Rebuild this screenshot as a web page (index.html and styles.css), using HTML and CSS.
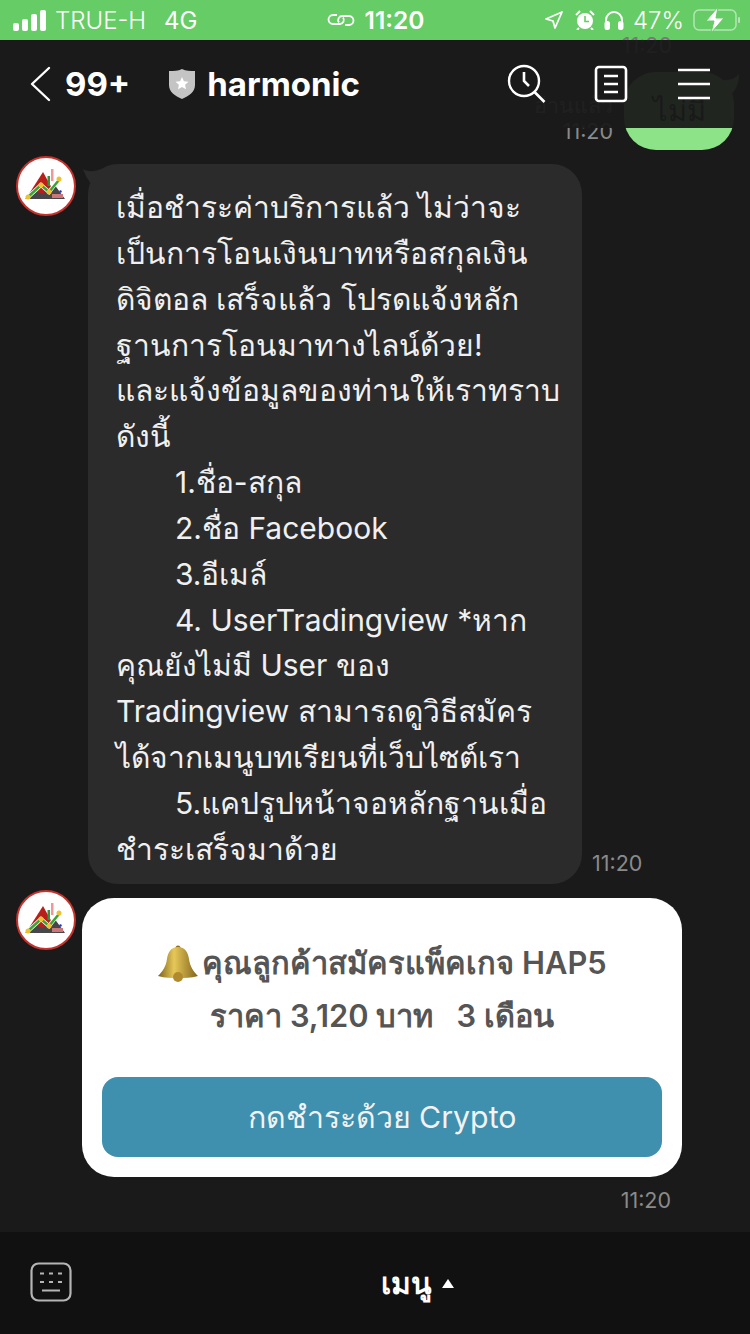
FILE: index.html
```html
<!DOCTYPE html>
<html lang="th">
    <head>
        <meta charset="UTF-8" />
        <meta name="viewport" content="width=device-width, initial-scale=1.0" />
        <title>harmonic</title>
        <link rel="stylesheet" href="styles.css">
    </head>
    <body>
        <div class="screen">
            <div class="status">
                <div class="status-side">
                    <div class="bars"><i></i><i></i><i></i><i></i></div>
                    <span class="carrier">TRUE-H</span>
                    <span class="net">4G</span>
                </div>
                <div class="status-mid">
                    <svg width="28" height="16" viewBox="0 0 28 16" fill="none" stroke="#fff" stroke-width="1.8"><path d="M10 3H6a4.5 4.5 0 0 0 0 9h7a4 4 0 0 0 3-6.500"/><path d="M18 13h4a4.500 4.500 0 0 0 0-9h-7a4 4 0 0 0-3 6.500"/></svg>
                    <b>11:20</b>
                </div>
                <div class="status-right">
                    <svg class="location" width="18" height="18" viewBox="0 0 18 18" fill="none" stroke="#fff" stroke-width="1.800" stroke-linejoin="round"><path d="M17 1 1 8l7 2 2 7z"/></svg>
                    <svg width="20" height="20" viewBox="0 0 20 20"><circle cx="10" cy="11" r="8" fill="#fff"/><path d="M10 6v5.500h4" fill="none" stroke="#66cc66" stroke-width="1.600"/><path d="M1 5l4-4M19 5l-4-4M4 18l-2 2M16 18l2 2" stroke="#fff" stroke-width="2"/></svg>
                    <svg width="20" height="20" viewBox="0 0 20 20" fill="none" stroke="#fff" stroke-width="2"><path d="M2 14V10a8 8 0 0 1 16 0v4"/><rect x="1.500" y="12" width="3.500" height="7" rx="1.500" fill="#fff"/><rect x="15" y="12" width="3.500" height="7" rx="1.500" fill="#fff"/></svg>
                    <span class="percent">47%</span>
                    <svg width="48" height="26" viewBox="0 0 48 26"><rect x="1" y="3" width="42" height="20" rx="5" fill="none" stroke="#fff" stroke-opacity=".5" stroke-width="1.500"/><rect x="45" y="10" width="2" height="6" rx="1" fill="#fff" fill-opacity=".5"/><path d="M25 0 13 14h8l-3 12 13-15h-8z" fill="#fff" stroke="#66cc66" stroke-width="1"/></svg>
                </div>
            </div>

            <div class="header">
                <svg class="back" width="22" height="36" viewBox="0 0 22 36" fill="none" stroke="#fff" stroke-width="2.400" stroke-linecap="round" stroke-linejoin="round"><path d="M20 2 3 18l17 16"/></svg>
                <span class="count">99+</span>
                <svg class="shield" width="28" height="32" viewBox="0 0 28 32"><path d="M14 1c4 2 8 2 13 2v14c0 7-6 11-13 14C7 28 1 24 1 17V3c5 0 9 0 13-2z" fill="#c4c4c4"/><path d="m14 9 1.900 4.200 4.600.5-3.400 3 .9 4.500-4-2.300-4 2.300.9-4.500-3.400-3 4.600-.5z" fill="#fff"/></svg>
                <span class="name">harmonic</span>
                <div class="header-icons">
                    <svg class="search" width="40" height="40" viewBox="0 0 40 40" fill="none" stroke="#fff" stroke-width="2.400"><circle cx="17" cy="17" r="15"/><path d="M17 8v9l5 5M27.500 28l10 10" stroke-width="2.600"/></svg>
                    <svg width="34" height="38" viewBox="0 0 34 38" fill="none" stroke="#fff" stroke-width="2.600"><rect x="2" y="2" width="30" height="34" rx="3"/><path d="M10 11h14M10 19h14M10 27h14"/></svg>
                    <svg width="34" height="32" viewBox="0 0 34 32" fill="none" stroke="#fff" stroke-width="2.600"><path d="M1 2h32M1 16h32M1 30h32"/></svg>
                </div>
            </div>

            <div class="chat">
                <div class="top-time">11:20</div>

                <div class="sent">
                    <div class="sent-meta">
                        <div>อ่านแล้ว</div>
                        <div>11:20</div>
                    </div>
                    <div class="sent-bubble">ไม่มี</div>
                    <svg class="sent-tail" width="18" height="22" viewBox="0 0 18 22"><path d="M0 6C8 7 14 5 18 0c0 9-3 17-10 22z" fill="#8de388"/></svg>
                </div>

                <div class="msg msg-text">
                    <svg class="avatar" width="60" height="60" viewBox="0 0 60 60"><circle cx="30" cy="30" r="29" fill="#fff" stroke="#c8322c" stroke-width="2"/><path d="M11 41 27 16l10 18-12 6z" fill="#b91f1a"/><path d="M9 43l10-8 8 3 11-10 11 15z" fill="#47474a"/><path d="M12 41l13-12 8 7 10-13" fill="none" stroke="#fff" stroke-width="4"/><path d="M12 41l13-12 8 7 10-12" fill="none" stroke="#37a52e" stroke-width="2.500"/><rect x="35" y="13" width="2.500" height="12" fill="#e99"/><rect x="31.500" y="20" width="2.500" height="10" fill="#3a8f3a"/><circle cx="25" cy="29" r="2.500" fill="#eec22e"/><circle cx="12" cy="41" r="2.500" fill="#eec22e"/><circle cx="33" cy="36" r="2.500" fill="#eec22e"/><circle cx="43" cy="23" r="2.500" fill="#eec22e"/><circle cx="44.500" cy="35.500" r="1.200" fill="#2233cc"/><rect x="36" y="38" width="11" height="4" fill="#c77"/></svg>
                    <svg class="tail" width="18" height="26" viewBox="0 0 18 26"><path d="M0 2c5 3 11 3 18 0v24C12 22 4 14 0 2z" fill="#2b2b2b"/></svg>
                    <div class="bubble">
                        <p>เมื่อชำระค่าบริการแล้ว ไม่ว่าจะ</p>
                        <p>เป็นการโอนเงินบาทหรือสกุลเงิน</p>
                        <p>ดิจิตอล เสร็จแล้ว โปรดแจ้งหลัก</p>
                        <p>ฐานการโอนมาทางไลน์ด้วย!</p>
                        <p>และแจ้งข้อมูลของท่านให้เราทราบ</p>
                        <p>ดังนี้</p>
                        <p class="indent">1.ชื่อ-สกุล</p>
                        <p class="indent">2.ชื่อ Facebook</p>
                        <p class="indent">3.อีเมล์</p>
                        <p class="indent">4. UserTradingview *หาก</p>
                        <p>คุณยังไม่มี User ของ</p>
                        <p>Tradingview สามารถดูวิธีสมัคร</p>
                        <p>ได้จากเมนูบทเรียนที่เว็บไซต์เรา</p>
                        <p class="indent">5.แคปรูปหน้าจอหลักฐานเมื่อ</p>
                        <p>ชำระเสร็จมาด้วย</p>
                    </div>
                    <span class="time">11:20</span>
                </div>

                <div class="msg msg-card">
                    <svg class="avatar" width="60" height="60" viewBox="0 0 60 60"><circle cx="30" cy="30" r="29" fill="#fff" stroke="#c8322c" stroke-width="2"/><path d="M11 41 27 16l10 18-12 6z" fill="#b91f1a"/><path d="M9 43l10-8 8 3 11-10 11 15z" fill="#47474a"/><path d="M12 41l13-12 8 7 10-13" fill="none" stroke="#fff" stroke-width="4"/><path d="M12 41l13-12 8 7 10-12" fill="none" stroke="#37a52e" stroke-width="2.500"/><rect x="35" y="13" width="2.500" height="12" fill="#e99"/><rect x="31.500" y="20" width="2.500" height="10" fill="#3a8f3a"/><circle cx="25" cy="29" r="2.500" fill="#eec22e"/><circle cx="12" cy="41" r="2.500" fill="#eec22e"/><circle cx="33" cy="36" r="2.500" fill="#eec22e"/><circle cx="43" cy="23" r="2.500" fill="#eec22e"/><circle cx="44.500" cy="35.500" r="1.200" fill="#2233cc"/><rect x="36" y="38" width="11" height="4" fill="#c77"/></svg>
                    <div class="card">
                        <div class="card-title">
                            <svg width="42" height="38" viewBox="0 0 42 38"><defs><linearGradient id="bell" x1="0" x2="1"><stop offset="0" stop-color="#7d6218"/><stop offset=".4" stop-color="#e6c859"/><stop offset="1" stop-color="#80631a"/></linearGradient></defs><circle cx="21" cy="3" r="2.500" fill="#8f7020"/><path d="M21 2c7 0 10 5 11 12 1 8 5 13 9 17-7 2-13 2-20 2s-13 0-20-2c4-4 8-9 9-17C11 7 14 2 21 2z" fill="url(#bell)"/><circle cx="21" cy="32" r="5" fill="#b08a2c"/></svg>
                            <span>คุณลูกค้าสมัครแพ็คเกจ HAP5</span>
                        </div>
                        <div class="card-price">ราคา 3,120 บาท&nbsp;&nbsp; 3 เดือน</div>
                        <div class="card-btn">กดชำระด้วย Crypto</div>
                    </div>
                </div>
                <div class="card-time">11:20</div>
            </div>

            <div class="bottom">
                <svg class="keyboard" width="42" height="40" viewBox="0 0 42 40" fill="none" stroke="#b5b5b5" stroke-width="2.200"><rect x="1.500" y="1.500" width="39" height="37" rx="7"/><path d="M10 11.500h4M19 11.500h4M28 11.500h4M10 20h4M19 20h4M28 20h4M12 28.500h18"/></svg>
                <div class="menu"><span>เมนู</span><i class="caret"></i></div>
            </div>
        </div>
    </body>
</html>
```

FILE: styles.css
```css
* {
    margin: 0;
    padding: 0;
    box-sizing: border-box;
}
body {
    background-color: #1a1a1a;
    font-family: Inter, "Noto Sans", "DejaVu Sans", sans-serif;
}
.screen {
    width: 750px;
    height: 1334px;
    position: relative;
    display: flex;
    flex-direction: column;
    overflow: hidden;
}

.status {
    height: 40px;
    flex: none;
    display: grid;
    grid-template-columns: 1fr auto 1fr;
    align-items: center;
    padding: 0 9px 0 13px;
    background-color: #66cc66;
    color: #fff;
    font-size: 24px;
}
.status-side {
    display: flex;
    align-items: center;
}
.bars {
    display: flex;
    align-items: flex-end;
    gap: 3px;
    height: 22px;
    margin-right: 9px;
}
.bars i {
    width: 6px;
    background-color: #fff;
    border-radius: 2px;
}
.bars i:nth-child(1) { height: 8px; }
.bars i:nth-child(2) { height: 12px; }
.bars i:nth-child(3) { height: 17px; }
.bars i:nth-child(4) { height: 21px; }
.carrier {
    margin-right: 18px;
    font-weight: 300;
}
.status-mid {
    display: flex;
    align-items: center;
    gap: 10px;
    margin-left: -3px;
}
.status-mid b {
    font-size: 24.500px;
    font-weight: 600;
}
.status-right {
    display: flex;
    align-items: center;
    justify-content: flex-end;
    gap: 9px;
}
.location {
    margin-right: 3px;
}
.percent {
    font-weight: 300;
}

.header {
    position: absolute;
    top: 40px;
    left: 0;
    width: 100%;
    height: 88px;
    display: flex;
    align-items: center;
    padding: 0 39px 0 29px;
    color: #fff;
    font-size: 33px;
    font-weight: 700;
    background-color: rgba(26, 26, 26, 0.95);
    z-index: 2;
}
.count {
    margin-left: 14px;
}
.shield {
    margin-left: 38px;
    margin-right: 11px;
}
.header-icons {
    margin-left: auto;
    display: flex;
    align-items: center;
    gap: 49px;
}
.search {
    margin-right: -2px;
}

.chat {
    flex: 1;
    min-height: 0;
    background-color: #1a1a1a;
}
.top-time {
    margin-top: -10px;
    padding-right: 78px;
    text-align: right;
    font-size: 21.500px;
    line-height: 30px;
    color: #777;
}
.sent {
    position: relative;
    display: flex;
    justify-content: flex-end;
    align-items: flex-end;
    gap: 11px;
    margin-top: 12px;
    padding-right: 16px;
}
.sent-meta {
    margin-bottom: 6px;
    text-align: right;
    font-size: 21.500px;
    line-height: 26px;
    color: #8a8a8a;
}
.sent-bubble {
    width: 110px;
    height: 78px;
    border-radius: 32px;
    background-color: #8de388;
    color: #111;
    font-size: 29px;
    line-height: 78px;
    text-align: center;
}
.sent-tail {
    position: absolute;
    top: 2px;
    right: 11px;
}

.msg {
    position: relative;
    display: flex;
    padding-left: 16px;
}
.avatar {
    flex: none;
}
.msg-text {
    margin-top: 6px;
    align-items: flex-start;
}
.tail {
    position: absolute;
    top: 11px;
    left: 83px;
}
.bubble {
    margin: 8px 0 0 12px;
    padding: 21px 0 11px 28px;
    width: 494px;
    background-color: #2b2b2b;
    border-radius: 30px;
    color: #f0f0f0;
    font-size: 30px;
    line-height: 45.850px;
    white-space: nowrap;
}
.indent {
    padding-left: 59px;
}
.time {
    align-self: flex-end;
    margin: 0 0 8px 10px;
    font-size: 21.500px;
    color: #8a8a8a;
}

.msg-card {
    margin-top: 6px;
}
.card {
    margin: 8px 0 0 6px;
    width: 600px;
    height: 279px;
    padding: 43px 20px 20px;
    background-color: #fff;
    border-radius: 32px;
    color: #555;
    text-align: center;
    font-size: 30.800px;
    font-weight: 600;
}
.card-title {
    display: flex;
    justify-content: center;
    align-items: center;
    gap: 3px;
    height: 46px;
}
.card-price {
    height: 46px;
    line-height: 50px;
    margin-top: 4px;
}
.card-btn {
    height: 80px;
    margin-top: 40px;
    border-radius: 16px;
    background-color: #3f8fae;
    color: #f2f2f2;
    font-size: 30.300px;
    font-weight: 400;
    line-height: 80px;
}
.card-time {
    margin-top: 10px;
    padding-right: 79px;
    text-align: right;
    font-size: 21.500px;
    color: #8a8a8a;
}

.bottom {
    height: 102px;
    flex: none;
    position: relative;
    display: flex;
    align-items: center;
    justify-content: center;
    padding-left: 84px;
    background-color: #111;
}
.keyboard {
    position: absolute;
    left: 30px;
    top: 30px;
}
.menu {
    display: flex;
    align-items: center;
    gap: 10px;
    color: #fff;
    font-size: 30px;
    font-weight: 600;
}
.caret {
    width: 0;
    height: 0;
    border-left: 6px solid transparent;
    border-right: 6px solid transparent;
    border-bottom: 9px solid #fff;
}
```
